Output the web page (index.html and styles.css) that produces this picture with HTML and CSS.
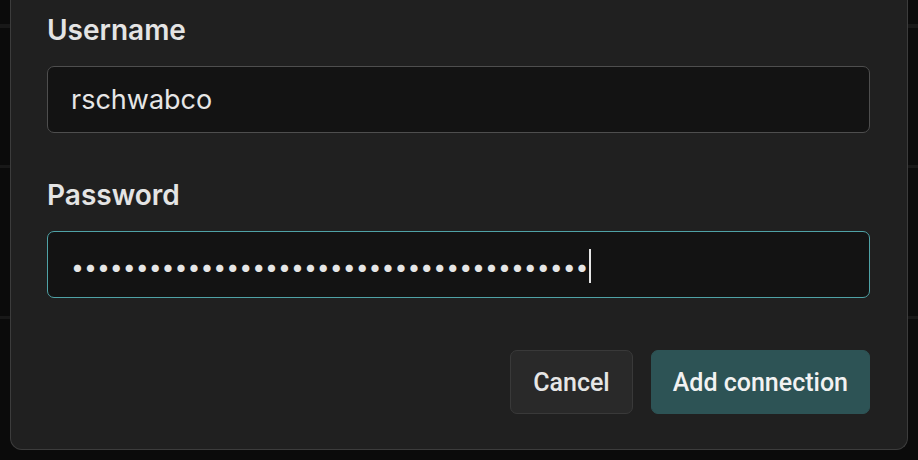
FILE: index.html
```html
<!DOCTYPE html>
<html lang="en">
<head>
    <meta charset="UTF-8">
    <meta name="viewport" content="width=device-width, initial-scale=1.0">
    <title>Add connection</title>
    <link rel="stylesheet" href="styles.css">
</head>
<body>
    <div class="backdrop">
        <div class="row"></div>
        <div class="row mid"></div>
        <div class="row tall"></div>
    </div>

    <div class="dialog">
        <div class="field">
            <label class="field-label">Username</label>
            <div class="input">rschwabco</div>
        </div>

        <div class="field">
            <label class="field-label">Password</label>
            <div class="input focused">
                <span class="dots">&bull;&bull;&bull;&bull;&bull;&bull;&bull;&bull;&bull;&bull;&bull;&bull;&bull;&bull;&bull;&bull;&bull;&bull;&bull;&bull;&bull;&bull;&bull;&bull;&bull;&bull;&bull;&bull;&bull;&bull;&bull;&bull;&bull;&bull;&bull;&bull;&bull;&bull;&bull;&bull;</span><span class="caret"></span>
            </div>
        </div>

        <div class="actions">
            <button class="btn btn-cancel">Cancel</button>
            <button class="btn btn-primary">Add connection</button>
        </div>
    </div>
</body>
</html>
```
FILE: styles.css
```css
html, body {
    margin: 0;
    height: 100%;
    overflow: hidden;
}
body {
    background: #0b0b0b;
    font-family: Inter, "Noto Sans", sans-serif;
    position: relative;
}
.row {
    height: 24px;
    border-bottom: 4px solid #181818;
}
.row.mid {
    height: 137px;
    border-bottom-width: 3px;
}
.row.tall {
    height: 148px;
    border-bottom-width: 3px;
}
.dialog {
    position: absolute;
    left: 10px;
    top: -40px;
    width: 898px;
    height: 490px;
    box-sizing: border-box;
    background: #202020;
    border: 1px solid #3c3c3c;
    border-top: none;
    border-radius: 0 0 12px 12px;
    padding: 54px 37px 0 36px;
}
.field {
    margin-bottom: 46px;
}
.field-label {
    display: block;
    color: #e4e4e4;
    font-size: 28px;
    font-weight: 600;
    line-height: 32px;
    margin-bottom: 20px;
}
.input {
    height: 67px;
    box-sizing: border-box;
    background: #131313;
    border: 1px solid #4e4e4e;
    border-radius: 7px;
    padding: 0 23px;
    display: flex;
    align-items: center;
    color: #e6e6e6;
    font-size: 27px;
}
.input.focused {
    border-color: #4fa2a6;
}
.dots {
    font-size: 23px;
    line-height: 34px;
    padding-top: 4px;
    color: #e6e6e6;
}
.caret {
    display: inline-block;
    width: 2px;
    height: 34px;
    background: #e6e6e6;
    margin-top: 2px;
}
.actions {
    display: flex;
    justify-content: flex-end;
    gap: 18px;
    margin-top: 52px;
}
.btn {
    height: 64px;
    border-radius: 7px;
    font-family: Roboto, "Noto Sans", sans-serif;
    font-size: 25px;
    font-weight: 500;
    padding: 0 22px;
    cursor: pointer;
}
.btn-cancel {
    background: #292929;
    border: 1px solid #393939;
    color: #e6e6e6;
}
.btn-primary {
    background: #2d5355;
    border: 1px solid #2d5355;
    color: #f2f2f2;
    padding: 0 21px;
}
```
